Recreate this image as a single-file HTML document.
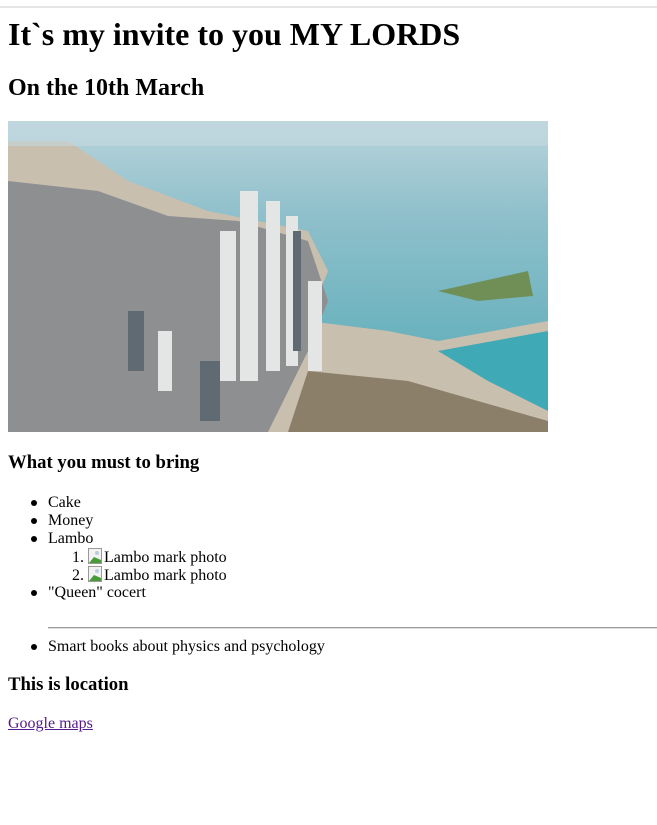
<!DOCTYPE html>
<html><head><meta charset="utf-8"><style>
body{margin:0;width:657px;height:825px;background:#fff;font-family:"Liberation Serif",serif;color:#000;position:relative;overflow:hidden}
.a{position:absolute;white-space:nowrap}
.t{font-size:16px;line-height:18px}
.b{display:inline-block;border-radius:50%;background:#000;position:absolute;left:-17px;top:6px;width:6px;height:6px}
</style></head><body>
<div class="a" style="left:0;top:6px;width:657px;height:0;border-top:2px solid #e6e6e6"></div>
<div class="a" style="left:8px;top:16px;font-size:32px;font-weight:bold;line-height:37px">It`s my invite to you MY LORDS</div>
<div class="a" style="left:8px;top:74px;font-size:24px;font-weight:bold;line-height:28px">On the 10th March</div>
<svg class="a" style="left:8px;top:121px" width="540" height="311" viewBox="0 0 540 311">
<defs><linearGradient id="s" x1="0" y1="0" x2="0" y2="1"><stop offset="0" stop-color="#b9d4dc"/><stop offset="0.3" stop-color="#8fc0cb"/><stop offset="1" stop-color="#4fa8b4"/></linearGradient></defs>
<rect width="540" height="311" fill="url(#s)"/>
<path d="M0 20 L60 20 L120 60 L200 90 L300 110 L320 150 L300 200 L380 210 L430 220 L540 200 L540 311 L0 311Z" fill="#c9bfae"/>
<path d="M0 60 L90 70 L160 95 L230 100 L300 120 L320 180 L300 230 L260 311 L0 311Z" fill="#8d8f90"/>
<path d="M430 170 L520 150 L525 175 L470 180Z" fill="#6f8f56"/>
<path d="M430 230 L540 210 L540 290 L480 260Z" fill="#3fa9b6"/>
<path d="M300 250 L400 260 L540 300 L540 311 L280 311Z" fill="#8c7f6a"/>
<g fill="#e4e6e6"><rect x="232" y="70" width="18" height="190"/><rect x="258" y="80" width="14" height="170"/><rect x="212" y="110" width="16" height="150"/><rect x="300" y="160" width="14" height="90"/><rect x="278" y="95" width="12" height="150"/><rect x="150" y="210" width="14" height="60"/></g>
<g fill="#5f6a72"><rect x="120" y="190" width="16" height="60"/><rect x="192" y="240" width="20" height="60"/><rect x="285" y="110" width="8" height="120"/></g>
<rect x="0" y="0" width="540" height="25" fill="#c4d9df" opacity="0.6"/>
</svg>
<div class="a" style="left:8px;top:452px;font-size:18.72px;font-weight:bold;line-height:22px">What you must to bring</div>
<div class="a t" style="left:48px;top:494px"><span class="b"></span>Cake</div>
<div class="a t" style="left:48px;top:512px"><span class="b"></span>Money</div>
<div class="a t" style="left:48px;top:530px"><span class="b"></span>Lambo</div>
<div class="a t" style="left:72px;top:548px">1. <svg width="16" height="16" viewBox="0 0 16 16" style="vertical-align:-2px"><rect x="0.5" y="0.5" width="13" height="15" fill="#f2f2f2" stroke="#999"/><path d="M1 15 L6 9 L13 12 L13 15Z" fill="#4a9a3a"/><circle cx="9" cy="5" r="2" fill="#bcd"/></svg>Lambo mark photo</div>
<div class="a t" style="left:72px;top:566px">2. <svg width="16" height="16" viewBox="0 0 16 16" style="vertical-align:-2px"><rect x="0.5" y="0.5" width="13" height="15" fill="#f2f2f2" stroke="#999"/><path d="M1 15 L6 9 L13 12 L13 15Z" fill="#4a9a3a"/><circle cx="9" cy="5" r="2" fill="#bcd"/></svg>Lambo mark photo</div>
<div class="a t" style="left:48px;top:584px"><span class="b"></span>"Queen" cocert</div>
<div class="a" style="left:48px;top:627px;width:609px;border-top:1px solid #999;border-bottom:1px solid #e0e0e0"></div>
<div class="a t" style="left:48px;top:638px"><span class="b"></span>Smart books about physics and psychology</div>
<div class="a" style="left:8px;top:674px;font-size:18.72px;font-weight:bold;line-height:22px">This is location</div>
<div class="a t" style="left:8px;top:715px;color:#551a8b;text-decoration:underline">Google maps</div>
</body></html>
